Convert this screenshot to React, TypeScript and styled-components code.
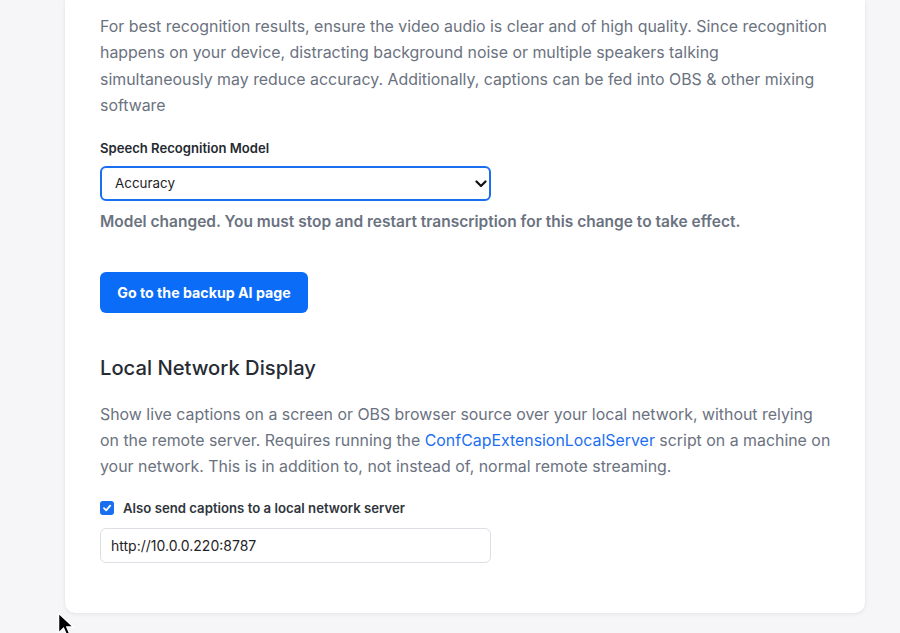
import React from "react";
import styled, { createGlobalStyle } from "styled-components";

const Global = createGlobalStyle`
  html, body { margin: 0; padding: 0; background: #f6f6f8; }
  body { font-family: Inter, "Noto Sans", "Liberation Sans", sans-serif; -webkit-font-smoothing: antialiased; }
  * { box-sizing: border-box; }
`;

const Page = styled.div`
  position: relative;
  width: 900px;
  height: 633px;
  overflow: hidden;
  background: #f6f6f8;
  padding: 0 35px 0 65px;
`;

const Card = styled.div`
  background: #fff;
  border-radius: 0 0 10px 10px;
  box-shadow: 0 1px 4px rgba(0, 0, 0, 0.08), 0 0 1px rgba(0, 0, 0, 0.06);
  padding: 14px 35px 50px 35px;
  display: flex;
  flex-direction: column;
`;

const Text = styled.p<{ $mb?: number }>`
  margin: 0 0 ${(p) => p.$mb ?? 0}px 0;
  width: 740px;
  font-size: 15.9px;
  line-height: 26.4px;
  color: #6b7280;
  white-space: nowrap;
`;

const Link = styled.a`
  color: #1d6ff2;
  text-decoration: none;
`;

const Label = styled.label`
  display: block;
  font-size: 13.1px;
  font-weight: 600;
  color: #252a31;
  margin-bottom: 10px;
  line-height: 16px;
`;

const SelectBox = styled.div`
  position: relative;
  width: 391px;
  height: 35px;
  border: 2px solid #1a6ff0;
  border-radius: 6px;
  display: flex;
  align-items: center;
  padding: 0 13px;
  font-size: 13.4px;
  color: #1f2328;
  margin-bottom: 11px;
`;

const Chevron = styled.svg`
  position: absolute;
  right: 2px;
  top: 11px;
`;

const Note = styled.p`
  margin: 0 0 40px 0;
  font-size: 15.5px;
  font-weight: 600;
  color: #6b7280;
  line-height: 20px;
`;

const Button = styled.button`
  align-self: flex-start;
  width: 208px;
  height: 41px;
  border: none;
  border-radius: 6px;
  background: #0b6cf7;
  color: #fff;
  font-family: inherit;
  font-size: 14.2px;
  font-weight: 700;
  padding: 0;
  margin-bottom: 41px;
`;

const Heading = styled.h3`
  margin: 0 0 20px 0;
  font-size: 20.2px;
  font-weight: 500;
  color: #262b33;
  line-height: 28px;
`;

const CheckRow = styled.div`
  display: flex;
  align-items: center;
  gap: 9px;
  margin-bottom: 12px;
`;

const Box = styled.span`
  width: 14px;
  height: 14px;
  border-radius: 3px;
  background: #1a6ff0;
  display: flex;
  align-items: center;
  justify-content: center;
`;

const CheckLabel = styled.span`
  font-size: 13.2px;
  font-weight: 600;
  color: #30353c;
`;

const Input = styled.div`
  width: 391px;
  height: 35px;
  border: 1px solid #dcdfe4;
  border-radius: 6px;
  display: flex;
  align-items: center;
  padding: 0 10px;
  font-size: 14px;
  color: #1f2328;
`;

const Cursor = styled.svg`
  position: absolute;
  left: 57px;
  top: 612px;
`;

export default function App() {
  return (
    <>
      <Global />
      <Page>
        <Card>
          <Text $mb={20}>
            For best recognition results, ensure the video audio is clear and of high quality. Since recognition
            <br />
            happens on your device, distracting background noise or multiple speakers talking
            <br />
            simultaneously may reduce accuracy. Additionally, captions can be fed into OBS &amp; other mixing
            <br />
            software
          </Text>
          <Label>Speech Recognition Model</Label>
          <SelectBox>
            Accuracy
            <Chevron width="12" height="10" viewBox="0 0 12 10">
              <path d="M1.5 2.5 L6 7 L10.5 2.5" fill="none" stroke="#111" strokeWidth="2.2" strokeLinecap="round" strokeLinejoin="round" />
            </Chevron>
          </SelectBox>
          <Note>Model changed. You must stop and restart transcription for this change to take effect.</Note>
          <Button>Go to the backup AI page</Button>
          <Heading>Local Network Display</Heading>
          <Text $mb={19}>
            Show live captions on a screen or OBS browser source over your local network, without relying
            <br />
            on the remote server. Requires running the <Link href="#">ConfCapExtensionLocalServer</Link> script on a
            machine on
            <br />
            your network. This is in addition to, not instead of, normal remote streaming.
          </Text>
          <CheckRow>
            <Box>
              <svg width="10" height="10" viewBox="0 0 10 10">
                <path d="M2 5.2 L4.2 7.3 L8.2 2.6" fill="none" stroke="#fff" strokeWidth="1.8" strokeLinecap="round" strokeLinejoin="round" />
              </svg>
            </Box>
            <CheckLabel>Also send captions to a local network server</CheckLabel>
          </CheckRow>
          <Input>http://10.0.0.220:8787</Input>
        </Card>
        <Cursor width="18" height="27" viewBox="0 0 14 22">
          <path d="M1 1 L1 17 L5 13 L8 20 L10.5 19 L7.6 12.2 L13 12.2 Z" fill="#000" stroke="#fff" strokeWidth="1" />
        </Cursor>
      </Page>
    </>
  );
}
